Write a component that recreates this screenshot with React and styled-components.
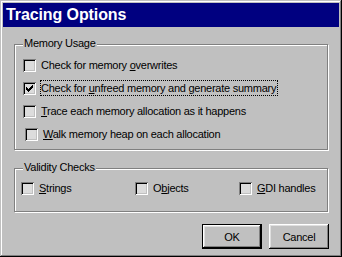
import React from "react";
import styled, { createGlobalStyle } from "styled-components";

const Global = createGlobalStyle`
  html, body { margin: 0; padding: 0; background: #c0c0c0; }
  * { box-sizing: border-box; }
`;

const Window = styled.div`
  width: 342px;
  height: 257px;
  background: #c0c0c0;
  padding: 3px;
  box-shadow: inset -1px -1px #000, inset 1px 1px #c0c0c0, inset -2px -2px #808080, inset 2px 2px #fff;
  font-family: "Liberation Sans", Arial, sans-serif;
  font-size: 11px;
  letter-spacing: -0.25px;
  color: #000;
  display: flex;
  flex-direction: column;
`;

const TitleBar = styled.div`
  height: 24px;
  background: #000080;
  color: #fff;
  display: flex;
  align-items: center;
  padding-left: 3px;
  font-size: 16px;
  font-weight: bold;
  letter-spacing: -0.1px;
  line-height: 24px;
`;

const Body = styled.div`
  padding: 17px 11px 0 11px;
  display: flex;
  flex-direction: column;
`;

const Group = styled.div`
  position: relative;
  border: 1px solid #808080;
  box-shadow: inset 1px 1px #fff, 1px 1px #fff;
  padding: ${(p) => p.$pad};
  margin-top: ${(p) => p.$mt || 0}px;
`;

const GroupLabel = styled.span`
  position: absolute;
  left: 8px;
  top: -8px;
  padding: 0 1px;
  line-height: 13px;
  background: #c0c0c0;
  white-space: nowrap;
`;

const Stack = styled.div`
  display: flex;
  flex-direction: column;
  gap: 7px;
`;

const Columns = styled.div`
  display: grid;
  grid-template-columns: 114px 104px auto;
`;

const Row = styled.div`
  display: flex;
  align-items: flex-start;
  height: 16px;
  margin-left: ${(p) => p.$indent || 0}px;
`;

const Box = styled.span`
  width: 13px;
  height: 13px;
  margin-top: 2px;
  flex: none;
  background: #dcdcdc;
  box-shadow: inset 1px 1px #808080, inset -1px -1px #fff, inset 2px 2px #000, inset -2px -2px #c0c0c0;
  display: flex;
  align-items: flex-start;
  justify-content: flex-start;
  padding: 3px;
`;

const Label = styled.span`
  margin-left: 4px;
  height: 16px;
  line-height: 14px;
  padding: 0 1px 0 0;
  border: 1px ${(p) => (p.$focus ? "dotted #000" : "solid transparent")};
  white-space: nowrap;
`;

const U = styled.span`
  text-decoration: underline;
  text-underline-offset: 1px;
`;

const Buttons = styled.div`
  display: flex;
  justify-content: flex-end;
  gap: 7px;
  margin-top: 12px;
  margin-right: -1px;
`;

const Button = styled.div`
  width: 60px;
  height: 25px;
  display: flex;
  align-items: center;
  justify-content: center;
  background: #c0c0c0;
  border: ${(p) => (p.$default ? "1px solid #000" : "none")};
  box-shadow: inset -1px -1px #000, inset 1px 1px #fff, inset -2px -2px #808080, inset 2px 2px #dfdfdf;
  line-height: 14px;
  padding-top: 1px;
`;

const Check = () => (
  <svg width="7" height="7" viewBox="0 0 7 7" shapeRendering="crispEdges">
    <path
      fill="#000"
      d="M6 0h1v3h-1zM5 1h1v3h-1zM4 2h1v3h-1zM0 2h1v3h-1zM1 3h1v3h-1zM2 4h1v3h-1zM3 3h1v3h-1z"
    />
  </svg>
);

const CheckRow = ({ checked, focus, indent, children }) => (
  <Row $indent={indent}>
    <Box>{checked && <Check />}</Box>
    <Label $focus={focus}>{children}</Label>
  </Row>
);

export default function App() {
  return (
    <>
      <Global />
      <Window>
        <TitleBar>Tracing Options</TitleBar>
        <Body>
          <Group $pad="12px 0 7px 8px">
            <GroupLabel>Memory Usage</GroupLabel>
            <Stack>
              <CheckRow>
                Check for memory <U>o</U>verwrites
              </CheckRow>
              <CheckRow checked focus>
                Check for <U>u</U>nfreed memory and generate summary
              </CheckRow>
              <CheckRow>
                <U>T</U>race each memory allocation as it happens
              </CheckRow>
              <CheckRow indent={2}>
                <U>W</U>alk memory heap on each allocation
              </CheckRow>
            </Stack>
          </Group>
          <Group $pad="11px 0 15px 6px" $mt={18}>
            <GroupLabel>Validity Checks</GroupLabel>
            <Columns>
              <CheckRow>
                <U>S</U>trings
              </CheckRow>
              <CheckRow>
                O<U>b</U>jects
              </CheckRow>
              <CheckRow>
                <U>G</U>DI handles
              </CheckRow>
            </Columns>
          </Group>
          <Buttons>
            <Button $default>OK</Button>
            <Button>Cancel</Button>
          </Buttons>
        </Body>
      </Window>
    </>
  );
}
